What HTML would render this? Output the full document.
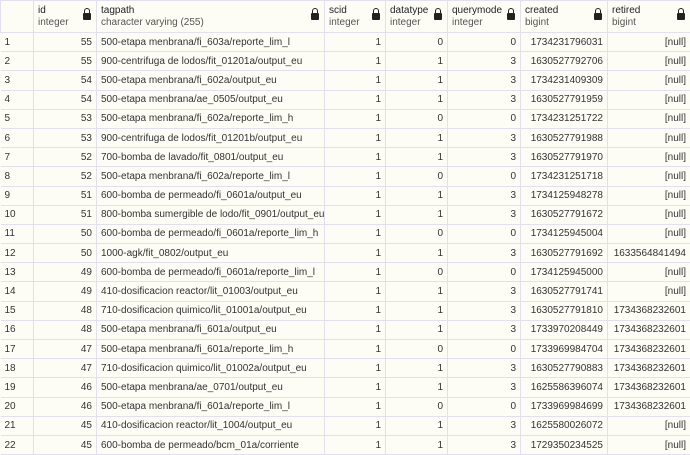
<!DOCTYPE html><html><head><style>
body{margin:0;background:#fdfdf6;font-family:"Liberation Sans",sans-serif;font-size:10px;color:#333;}
table{border-collapse:collapse;table-layout:fixed;width:690px;}
td,th{border:1px solid #e0e0ee;padding:0 4px;height:18.2px;white-space:nowrap;overflow:hidden;}
th{height:30px;text-align:left;font-weight:normal;vertical-align:middle;position:relative;line-height:12px;padding-top:1px}
th b{font-weight:normal;color:#222}
th span{color:#555}
th i{position:absolute;right:5px;top:12px;width:8px;height:7px;background:#222;border-radius:1px}
th i:before{content:"";position:absolute;left:1px;top:-5px;width:4px;height:5px;border:1px solid #222;border-bottom:none;border-radius:3px 3px 0 0}
td{text-align:right}
td:first-child,td:nth-child(3){text-align:left}
tr td:first-child{border-left:none}
</style></head><body><table>
<colgroup><col style="width:33px"><col style="width:63px"><col style="width:228px"><col style="width:61px"><col style="width:62px"><col style="width:73px"><col style="width:87px"><col style="width:83px"></colgroup>
<tr><th></th><th><b>id</b><br><span>integer</span><i></i></th><th><b>tagpath</b><br><span>character varying (255)</span><i></i></th><th><b>scid</b><br><span>integer</span><i></i></th><th><b>datatype</b><br><span>integer</span><i></i></th><th><b>querymode</b><br><span>integer</span><i></i></th><th><b>created</b><br><span>bigint</span><i></i></th><th><b>retired</b><br><span>bigint</span><i></i></th></tr>
<tr><td>1</td><td>55</td><td>500-etapa menbrana/fi_603a/reporte_lim_l</td><td>1</td><td>0</td><td>0</td><td>1734231796031</td><td>[null]</td></tr>
<tr><td>2</td><td>55</td><td>900-centrifuga de lodos/fit_01201a/output_eu</td><td>1</td><td>1</td><td>3</td><td>1630527792706</td><td>[null]</td></tr>
<tr><td>3</td><td>54</td><td>500-etapa menbrana/fi_602a/output_eu</td><td>1</td><td>1</td><td>3</td><td>1734231409309</td><td>[null]</td></tr>
<tr><td>4</td><td>54</td><td>500-etapa menbrana/ae_0505/output_eu</td><td>1</td><td>1</td><td>3</td><td>1630527791959</td><td>[null]</td></tr>
<tr><td>5</td><td>53</td><td>500-etapa menbrana/fi_602a/reporte_lim_h</td><td>1</td><td>0</td><td>0</td><td>1734231251722</td><td>[null]</td></tr>
<tr><td>6</td><td>53</td><td>900-centrifuga de lodos/fit_01201b/output_eu</td><td>1</td><td>1</td><td>3</td><td>1630527791988</td><td>[null]</td></tr>
<tr><td>7</td><td>52</td><td>700-bomba de lavado/fit_0801/output_eu</td><td>1</td><td>1</td><td>3</td><td>1630527791970</td><td>[null]</td></tr>
<tr><td>8</td><td>52</td><td>500-etapa menbrana/fi_602a/reporte_lim_l</td><td>1</td><td>0</td><td>0</td><td>1734231251718</td><td>[null]</td></tr>
<tr><td>9</td><td>51</td><td>600-bomba de permeado/fi_0601a/output_eu</td><td>1</td><td>1</td><td>3</td><td>1734125948278</td><td>[null]</td></tr>
<tr><td>10</td><td>51</td><td>800-bomba sumergible de lodo/fit_0901/output_eu</td><td>1</td><td>1</td><td>3</td><td>1630527791672</td><td>[null]</td></tr>
<tr><td>11</td><td>50</td><td>600-bomba de permeado/fi_0601a/reporte_lim_h</td><td>1</td><td>0</td><td>0</td><td>1734125945004</td><td>[null]</td></tr>
<tr><td>12</td><td>50</td><td>1000-agk/fit_0802/output_eu</td><td>1</td><td>1</td><td>3</td><td>1630527791692</td><td>1633564841494</td></tr>
<tr><td>13</td><td>49</td><td>600-bomba de permeado/fi_0601a/reporte_lim_l</td><td>1</td><td>0</td><td>0</td><td>1734125945000</td><td>[null]</td></tr>
<tr><td>14</td><td>49</td><td>410-dosificacion reactor/lit_01003/output_eu</td><td>1</td><td>1</td><td>3</td><td>1630527791741</td><td>[null]</td></tr>
<tr><td>15</td><td>48</td><td>710-dosificacion quimico/lit_01001a/output_eu</td><td>1</td><td>1</td><td>3</td><td>1630527791810</td><td>1734368232601</td></tr>
<tr><td>16</td><td>48</td><td>500-etapa menbrana/fi_601a/output_eu</td><td>1</td><td>1</td><td>3</td><td>1733970208449</td><td>1734368232601</td></tr>
<tr><td>17</td><td>47</td><td>500-etapa menbrana/fi_601a/reporte_lim_h</td><td>1</td><td>0</td><td>0</td><td>1733969984704</td><td>1734368232601</td></tr>
<tr><td>18</td><td>47</td><td>710-dosificacion quimico/lit_01002a/output_eu</td><td>1</td><td>1</td><td>3</td><td>1630527790883</td><td>1734368232601</td></tr>
<tr><td>19</td><td>46</td><td>500-etapa menbrana/ae_0701/output_eu</td><td>1</td><td>1</td><td>3</td><td>1625586396074</td><td>1734368232601</td></tr>
<tr><td>20</td><td>46</td><td>500-etapa menbrana/fi_601a/reporte_lim_l</td><td>1</td><td>0</td><td>0</td><td>1733969984699</td><td>1734368232601</td></tr>
<tr><td>21</td><td>45</td><td>410-dosificacion reactor/lit_1004/output_eu</td><td>1</td><td>1</td><td>3</td><td>1625580026072</td><td>[null]</td></tr>
<tr><td>22</td><td>45</td><td>600-bomba de permeado/bcm_01a/corriente</td><td>1</td><td>1</td><td>3</td><td>1729350234525</td><td>[null]</td></tr>
</table></body></html>
